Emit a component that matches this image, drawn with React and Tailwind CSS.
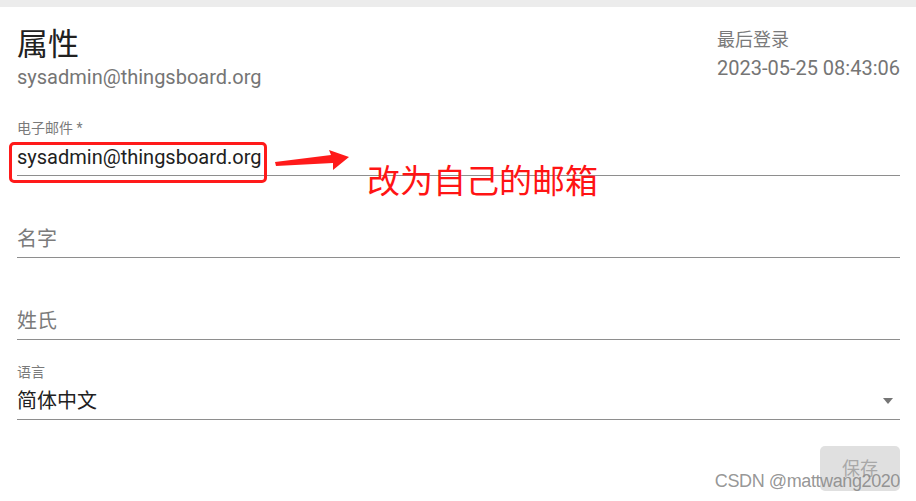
import React from "react";

const latin = { fontFamily: "Roboto, 'Noto Sans CJK SC', sans-serif" };

const Field = ({ label, value, placeholder, select, className = "" }) => {
  return (
    <div className={className}>
      {label && (
        <div className="h-[18px] text-[14px] leading-[18px] text-[#7a7a7a]">
          {label}
        </div>
      )}
      <div
        className={`flex justify-between items-center h-[28px] mb-[4px] text-[20px] leading-[28px] ${
          label ? "mt-[6px]" : ""
        }`}
      >
        {value ? (
          <span className="text-[#212121]">{value}</span>
        ) : (
          <span className="text-[#7b7b7b]">{placeholder}</span>
        )}
        {select && (
          <span className="mr-[7px] w-0 h-0 border-l-[5px] border-r-[5px] border-t-[6px] border-l-transparent border-r-transparent border-t-[#757575]" />
        )}
      </div>
      <div className="h-px bg-[#8e8e8e]" />
    </div>
  );
};

const App = () => {
  return (
    <div className="relative w-[916px] h-[501px] bg-white overflow-hidden" style={latin}>
      <div className="h-[7px] bg-[#ececec]" />
      <div className="pl-[17px] pr-[16px]">
        <div className="flex justify-between items-start pt-[18px]">
          <div>
            <h1 className="text-[31px] leading-[40px] text-[#212121] font-normal">属性</h1>
            <div className="text-[20px] leading-[24px] text-[#757575]">
              sysadmin@thingsboard.org
            </div>
          </div>
          <div className="mt-[3px]">
            <div className="text-[18px] leading-[24px] text-[#7a7a7a]">最后登录</div>
            <div className="mt-[4px] text-[20px] leading-[24px] text-[#757575]">
              2023-05-25 08:43:06
            </div>
          </div>
        </div>

        <Field className="mt-[30px]" label="电子邮件 *" value="sysadmin@thingsboard.org" />
        <Field className="mt-[49px]" placeholder="名字" />
        <Field className="mt-[49px]" placeholder="姓氏" />
        <Field className="mt-[23px]" label="语言" value="简体中文" select />

        <div className="flex justify-end mt-[26px]">
          <button className="w-[80px] h-[45px] rounded-[5px] bg-[#e0e0e0] text-[18px] text-[#a8a8a8]">
            保存
          </button>
        </div>
      </div>

      {/* annotations */}
      <div className="absolute left-[9px] top-[142px] w-[258px] h-[41px] border-[3px] border-[#ff1a1a] rounded-[5px]" />
      <svg className="absolute left-0 top-0" width="916" height="501">
        <polygon
          points="275,162 331,155 329,150 349,157 333,170 333,163 276,166"
          fill="#ff1a1a"
        />
      </svg>
      <div
        className="absolute left-[367px] top-[159px] text-[33px] leading-[40px] text-[#ff1414]"
        style={{ fontFamily: "'Noto Sans CJK SC', sans-serif" }}
      >
        改为自己的邮箱
      </div>
      <div
        className="absolute right-[16px] bottom-[9px] text-[18px] leading-[22px] text-[#8a8a8a]/90 tracking-[-0.4px]"
        style={{ fontFamily: "'Liberation Sans', sans-serif" }}
      >
        CSDN @mattwang2020
      </div>
    </div>
  );
};

export default App;
